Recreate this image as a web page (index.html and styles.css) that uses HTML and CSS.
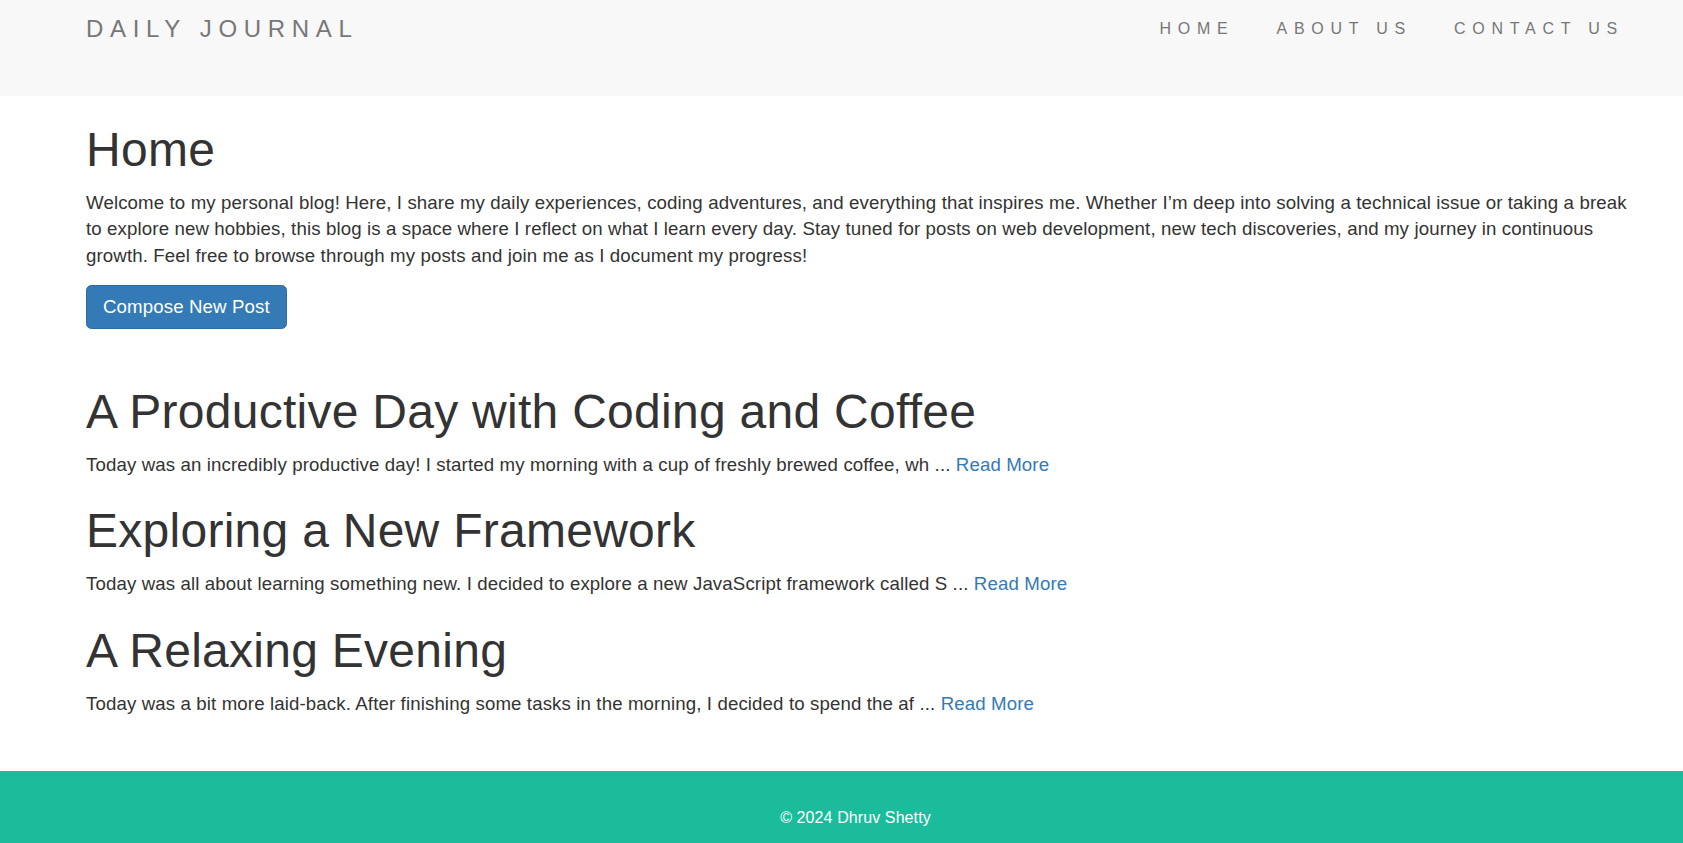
FILE: index.html
```html
<!DOCTYPE html>
<html lang="en">
<head>
  <meta charset="utf-8">
  <title>Daily Journal</title>
  <link rel="stylesheet" href="styles.css">
</head>
<body>
  <header class="navbar">
    <a class="brand" href="#">DAILY JOURNAL</a>
    <nav class="nav">
      <a class="nav-link" href="#">HOME</a>
      <a class="nav-link" href="#">ABOUT US</a>
      <a class="nav-link" href="#">CONTACT US</a>
    </nav>
  </header>

  <main class="container">
    <h1 class="title">Home</h1>
    <p class="text">Welcome to my personal blog! Here, I share my daily experiences, coding adventures, and everything that inspires me. Whether I’m deep into solving a technical issue or taking a break to explore new hobbies, this blog is a space where I reflect on what I learn every day. Stay tuned for posts on web development, new tech discoveries, and my journey in continuous growth. Feel free to browse through my posts and join me as I document my progress!</p>
    <div class="compose-row">
      <a class="btn" href="#">Compose New Post</a>
    </div>

    <section class="posts">
      <article class="post">
        <h1 class="title">A Productive Day with Coding and Coffee</h1>
        <p class="text">Today was an incredibly productive day! I started my morning with a cup of freshly brewed coffee, wh ... <a class="read-more" href="#">Read More</a></p>
      </article>
      <article class="post">
        <h1 class="title">Exploring a New Framework</h1>
        <p class="text">Today was all about learning something new. I decided to explore a new JavaScript framework called S ... <a class="read-more" href="#">Read More</a></p>
      </article>
      <article class="post">
        <h1 class="title">A Relaxing Evening</h1>
        <p class="text">Today was a bit more laid-back. After finishing some tasks in the morning, I decided to spend the af ... <a class="read-more" href="#">Read More</a></p>
      </article>
    </section>
  </main>

  <footer class="footer">
    <p class="footer-text">© 2024 Dhruv Shetty</p>
  </footer>
</body>
</html>
```

FILE: styles.css
```css
html, body {
  margin: 0;
  padding: 0;
}

body {
  font-family: "Liberation Sans", Arial, Helvetica, sans-serif;
  font-size: 18.67px;
  line-height: 26.67px;
  letter-spacing: 0.12px;
  color: #333333;
  background: #ffffff;
}

a {
  text-decoration: none;
}

.navbar {
  display: flex;
  justify-content: space-between;
  align-items: flex-start;
  height: 96px;
  box-sizing: border-box;
  padding: 16px 38px 0 66px;
  background: #f8f8f8;
}

.brand {
  display: block;
  padding: 0 20px;
  font-size: 24px;
  line-height: 26.67px;
  letter-spacing: 6.67px;
  color: #777777;
}

.nav {
  display: flex;
}

.nav-link {
  display: block;
  padding: 0 21px;
  font-size: 16px;
  line-height: 26.67px;
  letter-spacing: 6.75px;
  color: #777777;
}

.container {
  padding: 1px 44px 40px 86px;
}

.title {
  margin: 26.67px 0 13.33px;
  font-size: 48px;
  font-weight: 500;
  line-height: 52.8px;
  letter-spacing: 0.27px;
  color: #333333;
}

.text {
  margin: 0 0 13.33px;
}

.compose-row {
  margin-top: 15px;
}

.btn {
  display: inline-block;
  box-sizing: border-box;
  height: 44.67px;
  padding: 8px 16px;
  font-size: 18.67px;
  line-height: 26.67px;
  color: #ffffff;
  background: #337ab7;
  border: 1px solid #2e6da4;
  border-radius: 5.33px;
}

.posts {
  margin-top: 56.3px;
}

.read-more {
  color: #337ab7;
}

.footer {
  height: 72px;
  box-sizing: border-box;
  padding: 36px 38px 0 66px;
  background: #1abc9c;
  text-align: center;
}

.footer-text {
  margin: 0;
  font-size: 16px;
  line-height: 22.86px;
  letter-spacing: 0.1px;
  color: #ffffff;
}
```
